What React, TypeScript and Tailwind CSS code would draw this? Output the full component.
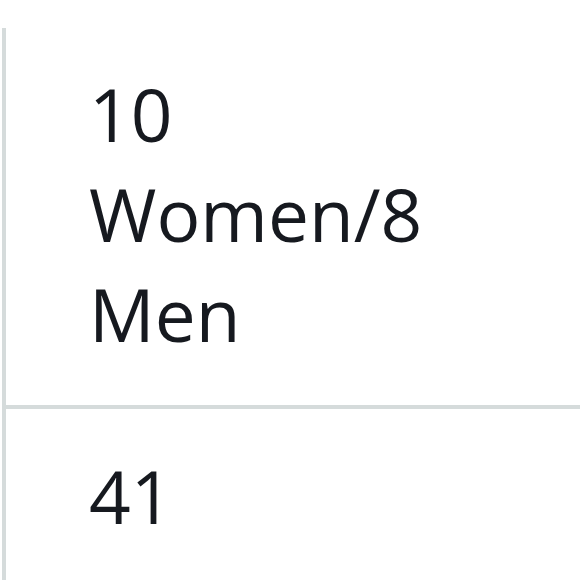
export default function App() {
  const rows = [
    { id: 'ratio', value: '10 Women/8 Men' },
    { id: 'total', value: '41' },
  ];

  return (
    <div className="w-[580px] h-[580px] overflow-hidden bg-white pt-[28px] pl-[2px]">
      <div
        className="border-l-4 border-[#d5dbdb] h-full text-[#16191f] text-[73px] leading-[100px]"
        style={{ fontFamily: '"Open Sans", "Noto Sans", sans-serif' }}
      >
        {rows.map((row, i) => (
          <div
            key={row.id}
            className={
              i === 0
                ? 'pl-[83px] pr-[120px] pt-[36px] pb-[41px] border-b-4 border-[#d5dbdb]'
                : 'pl-[83px] pt-[37px]'
            }
          >
            {row.value}
          </div>
        ))}
      </div>
    </div>
  );
}
